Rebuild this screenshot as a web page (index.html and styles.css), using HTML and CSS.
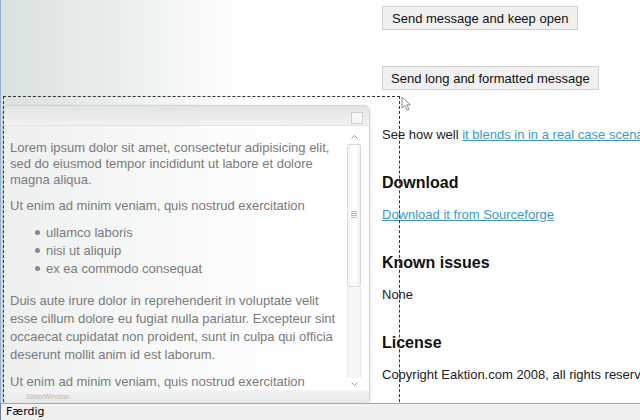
FILE: index.html
```html
<!DOCTYPE html>
<html>
<head>
<meta charset="utf-8">
<link rel="stylesheet" href="styles.css">
</head>
<body>
<div class="page">
  <div class="main">
    <div class="left"></div>
    <div class="right">
      <button class="btn">Send message and keep open</button>
      <button class="btn btn-second">Send long and formatted message</button>
      <p class="txt first">See how well <a href="#">it blends in in a real case scenario</a></p>
      <h2>Download</h2>
      <p class="txt"><a href="#">Download it from Sourceforge</a></p>
      <h2>Known issues</h2>
      <p class="txt">None</p>
      <h2>License</h2>
      <p class="txt">Copyright Eaktion.com 2008, all rights reserved</p>
    </div>

    <div class="slider">
      <div class="slider-title"><span class="close"></span></div>
      <div class="slider-body">
        <div class="slider-text">
          <p class="p1">Lorem ipsum dolor sit amet, consectetur adipisicing elit, sed do eiusmod tempor incididunt ut labore et dolore magna aliqua.</p>
          <p>Ut enim ad minim veniam, quis nostrud exercitation</p>
          <ul>
            <li>ullamco laboris</li>
            <li>nisi ut aliquip</li>
            <li>ex ea commodo consequat</li>
          </ul>
          <p>Duis aute irure dolor in reprehenderit in voluptate velit esse cillum dolore eu fugiat nulla pariatur. Excepteur sint occaecat cupidatat non proident, sunt in culpa qui officia deserunt mollit anim id est laborum.</p>
          <p>Ut enim ad minim veniam, quis nostrud exercitation</p>
        </div>
        <div class="scrollbar">
          <svg class="arrow" width="7" height="4" viewBox="0 0 7 4"><path d="M0.5 3.5 L3.5 0.5 L6.5 3.5" fill="none" stroke="#9a9a9a" stroke-width="1"/></svg>
          <div class="thumb"><span class="grip"></span></div>
          <div class="track"></div>
          <svg class="arrow" width="7" height="4" viewBox="0 0 7 4"><path d="M0.5 0.5 L3.5 3.5 L6.5 0.5" fill="none" stroke="#9a9a9a" stroke-width="1"/></svg>
        </div>
      </div>
      <div class="slider-foot">SliderWindow</div>
    </div>

    <div class="selection"></div>
    <svg class="cursor" width="12" height="16" viewBox="0 0 12 16"><path d="M1 1 L1 12 L3.8 9.6 L6 14.2 L8 13.3 L5.8 8.8 L9.4 8.8 Z" fill="#fff" stroke="#8c8c8c" stroke-width="1" stroke-linejoin="round"/></svg>
  </div>
  <div class="status">Færdig</div>
</div>
</body>
</html>
```

FILE: styles.css
```css
html, body {
  margin: 0;
  padding: 0;
  background: #fff;
}
.page {
  width: 640px;
  height: 420px;
  display: flex;
  flex-direction: column;
  overflow: hidden;
  font-family: "Liberation Sans", Arial, sans-serif;
}
.main {
  position: relative;
  flex: 1;
  min-height: 0;
  display: flex;
  border-left: 1px solid #8fb2d6;
  overflow: hidden;
}
.left {
  width: 381px;
  flex: none;
  background: linear-gradient(to right, #dae2dd 0px, #e9eeeb 110px, #f8faf8 200px, #ffffff 250px);
}
.right {
  flex: 1;
  display: flex;
  flex-direction: column;
  align-items: flex-start;
  padding-top: 6px;
  white-space: nowrap;
}
.right > * {
  flex: none;
}
.btn {
  font-family: "Liberation Sans", Arial, sans-serif;
  font-size: 13px;
  color: #111;
  background: #f0f0f0;
  border: 1px solid #d2d2d2;
  height: 24px;
  padding: 0 9px 0 9px;
  margin: 0;
}
.btn-second {
  margin-top: 36px;
  padding: 0 8px;
}
.txt {
  font-size: 13px;
  line-height: 16px;
  color: #222;
  margin: 0 0 30px 0;
}
.txt.first {
  margin-top: 37px;
}
.txt a {
  color: #3c9ac8;
}
h2 {
  font-size: 16px;
  line-height: 20px;
  font-weight: bold;
  color: #111;
  margin: 0 0 14px 0;
}

/* slider window overlay */
.slider {
  position: absolute;
  left: 2px;
  top: 105px;
  width: 365px;
  height: 297px;
  border: 1px solid #d3d6d4;
  border-radius: 6px;
  box-shadow: 0 1px 3px rgba(0,0,0,0.18);
  display: flex;
  flex-direction: column;
  overflow: hidden;
  background: linear-gradient(to right, #edf0ee 0px, #f7f9f8 150px, #ffffff 300px);
}
.slider-title {
  height: 19px;
  flex: none;
  position: relative;
  background: linear-gradient(to bottom, #e2e4e3, #f1f2f1);
  border-bottom: 1px solid #e2e4e3;
}
.close {
  position: absolute;
  right: 6px;
  top: 6px;
  width: 10px;
  height: 10px;
  border: 1px solid #cfcfcf;
  background: #f7f7f7;
}
.slider-body {
  flex: 1;
  display: flex;
  min-height: 0;
}
.slider-text {
  flex: 1;
  overflow: hidden;
  padding: 14px 0 0 6px;
  font-size: 13px;
  line-height: 18px;
  color: #7a7a7a;
}
.slider-text p {
  margin: 0 0 9px 0;
}
.slider-text .p1 {
  line-height: 16px;
}
.slider-text ul {
  margin: 9px 0 14px 0;
  padding-left: 25px;
  list-style: none;
}
.slider-text ul li {
  line-height: 18px;
}
.slider-text ul li::before {
  content: "";
  display: inline-block;
  width: 5px;
  height: 5px;
  border-radius: 50%;
  background: #8a8a8a;
  vertical-align: middle;
  margin: -2px 6px 0 0;
}
.scrollbar {
  width: 16px;
  flex: none;
  margin-right: 7px;
  display: flex;
  flex-direction: column;
  align-items: center;
  padding-top: 9px;
  padding-bottom: 4px;
}
.arrow {
  flex: none;
  margin: 0 0 5px 0;
}
.scrollbar .arrow:last-child {
  margin: 4px 0 0 0;
}
.thumb {
  width: 14px;
  height: 143px;
  flex: none;
  border: 1px solid #dadada;
  border-radius: 2px;
  background: linear-gradient(to right, #f4f4f4, #ffffff 60%, #f0f0f0);
  display: flex;
  align-items: center;
  justify-content: center;
  box-sizing: border-box;
}
.grip {
  width: 6px;
  height: 7px;
  background: repeating-linear-gradient(to bottom, #b8b8b8 0 1px, transparent 1px 2px);
  margin-top: -2px;
}
.track {
  flex: 1;
  width: 14px;
  background: #f6f6f6;
  border-left: 1px solid #eaeaea;
  border-right: 1px solid #eaeaea;
  box-sizing: border-box;
}
.slider-foot {
  height: 13px;
  flex: none;
  font-size: 7px;
  line-height: 13px;
  color: #b9b9b9;
  padding-left: 22px;
  background: linear-gradient(to bottom, #f2f3f2, #e6e8e7);
}

.selection {
  position: absolute;
  left: 2px;
  top: 96px;
  width: 395px;
  height: 320px;
  border: 1px dashed #333;
  border-bottom: none;
  pointer-events: none;
}
.cursor {
  position: absolute;
  left: 400px;
  top: 96px;
}

.status {
  height: 16px;
  flex: none;
  border-top: 1px solid #a6a6a6;
  border-left: 1px solid #6f7f90;
  background: #f0f0ef;
  font-family: "DejaVu Sans", Tahoma, sans-serif;
  font-size: 11px;
  line-height: 16px;
  padding-left: 5px;
  color: #000;
}
```
